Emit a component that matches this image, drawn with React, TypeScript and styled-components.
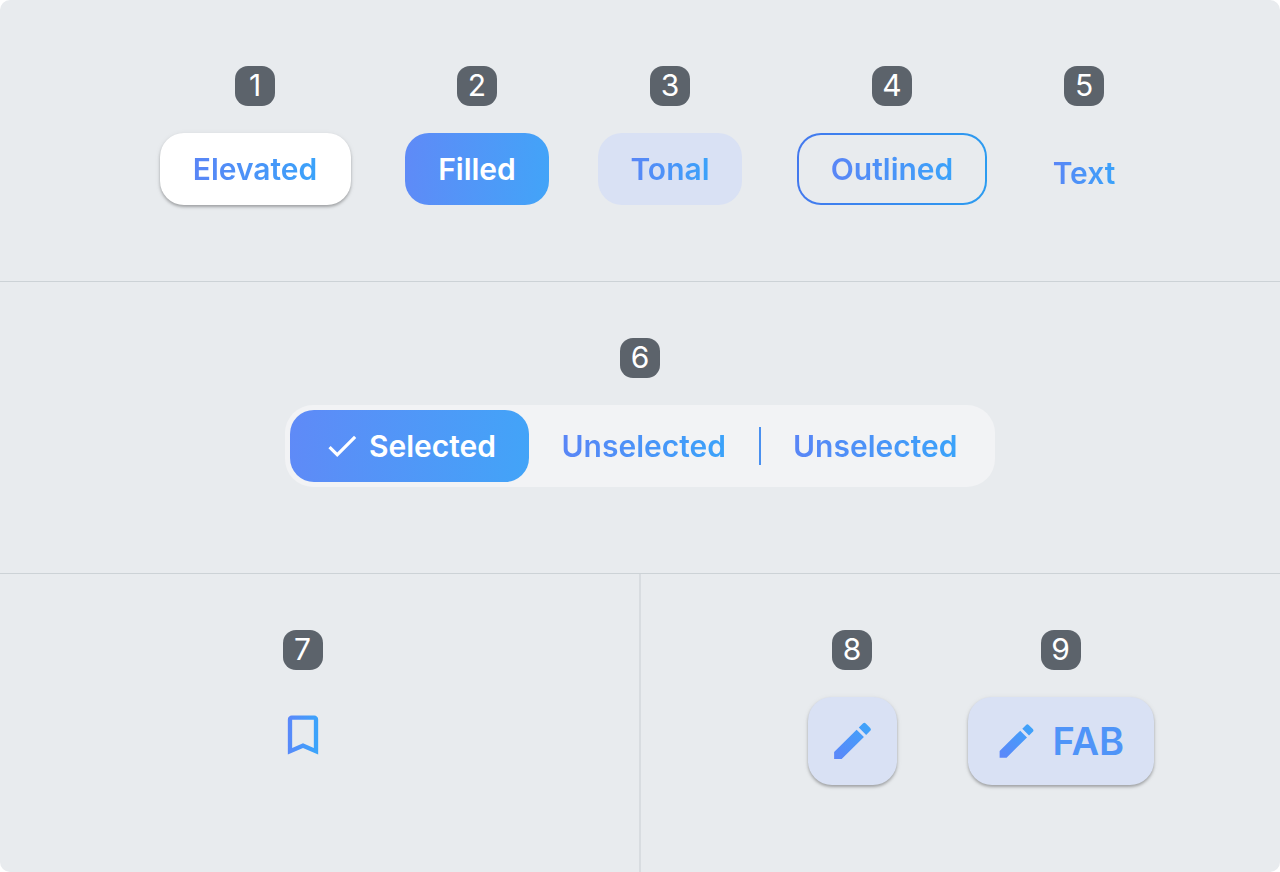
import React from "react";
import styled, { createGlobalStyle, css } from "styled-components";

const brand = "linear-gradient(95deg, #5f8af7, #42a4f8)";
const inkGradient = "linear-gradient(95deg, #5a85f6, #3aa3fa)";

const GlobalStyle = createGlobalStyle`
  *, *::before, *::after { box-sizing: border-box; }
  body {
    margin: 0;
    background: #ffffff;
    font-family: Inter, "Liberation Sans", sans-serif;
  }
  button { font: inherit; cursor: pointer; }
`;

const Board = styled.main`
  display: flex;
  flex-direction: column;
  min-height: 100vh;
  background: #e8ebee;
  border-radius: 10px;
  overflow: hidden;
`;

const Section = styled.section`
  padding: 66px 24px 68px;
  border-bottom: 1px solid #ccd2d6;
`;

const ButtonGrid = styled(Section)`
  display: grid;
  grid-template-columns:
    minmax(0, 251px) minmax(0, 193px) minmax(0, 193px) minmax(0, 251px)
    minmax(0, 133px);
  justify-content: center;
`;

const SegmentSection = styled(Section)`
  padding: 56px 24px 86px;
`;

const Split = styled.div`
  display: grid;
  grid-template-columns: 1fr 1fr;
  flex: 1;
`;

const Panel = styled.section<{ $side: "left" | "right" }>`
  display: flex;
  justify-content: center;
  gap: 71px;
  padding: ${(p) => (p.$side === "left" ? "56px 34px 86px 0" : "56px 0 86px 40px")};
  border: 0 solid #d8dce0;
  border-width: ${(p) => (p.$side === "left" ? "0 1px 0 0" : "0 0 0 1px")};
`;

const Specimen = styled.div`
  display: flex;
  flex-direction: column;
  align-items: center;
  gap: 27px;
`;

const Badge = styled.span`
  display: flex;
  justify-content: center;
  width: 40px;
  height: 40px;
  border-radius: 13px;
  background: #5c636b;
  color: #ffffff;
  font-size: 30px;
  line-height: 39px;
`;

const GradientText = styled.span`
  background: ${inkGradient};
  background-clip: text;
  -webkit-background-clip: text;
  color: transparent;
`;

type Variant = "elevated" | "filled" | "tonal" | "outlined" | "text";

const variants = {
  elevated: css`
    width: 191px;
    background: #ffffff;
    box-shadow: 0 2px 3px rgba(0, 0, 0, 0.28), 0 1px 6px rgba(0, 0, 0, 0.06);
  `,
  filled: css`
    width: 144px;
    background: ${brand};
    color: #ffffff;
  `,
  tonal: css`
    width: 144px;
    background: #d9e1f4;
  `,
  outlined: css`
    width: 190px;
    border: 2px solid transparent;
    background: linear-gradient(#e8ebee, #e8ebee) padding-box,
      linear-gradient(95deg, #4378ee, #2b9cf0) border-box;
  `,
  text: css`
    height: 80px;
    background: none;
  `,
};

const Button = styled.button<{ $variant: Variant }>`
  display: flex;
  align-items: center;
  justify-content: center;
  height: 72px;
  padding: 0;
  border: 0;
  border-radius: 24px;
  font-size: 30px;
  font-weight: 600;
  line-height: 40px;
  ${(p) => variants[p.$variant]}
`;

const Segmented = styled.div`
  display: flex;
  align-items: center;
  width: 710px;
  max-width: 100%;
  padding: 5px;
  border-radius: 28px;
  background: #f2f3f5;
`;

const Segment = styled.button<{ $selected?: boolean }>`
  display: flex;
  flex: ${(p) => (p.$selected ? "0 0 239px" : "1 1 0")};
  align-items: center;
  justify-content: center;
  gap: 8px;
  height: 72px;
  padding: 0;
  border: 0;
  border-radius: 24px;
  background: ${(p) => (p.$selected ? brand : "none")};
  color: #ffffff;
  font-size: 30px;
  font-weight: 600;
  line-height: 40px;
`;

const SegmentDivider = styled.span`
  width: 2px;
  height: 38px;
  background: #4a90f0;
`;

const IconButton = styled.button`
  display: flex;
  align-items: center;
  justify-content: center;
  width: 76px;
  height: 76px;
  padding: 0;
  border: 0;
  background: none;
`;

const Fab = styled.button<{ $extended?: boolean }>`
  display: flex;
  align-items: center;
  justify-content: ${(p) => (p.$extended ? "flex-start" : "center")};
  gap: 14px;
  width: ${(p) => (p.$extended ? "186px" : "89px")};
  height: 88px;
  padding: 0 ${(p) => (p.$extended ? "26px" : "0")};
  border: 0;
  border-radius: 24px;
  background: #d9e1f4;
  box-shadow: 0 2px 3px rgba(0, 0, 0, 0.28), 0 1px 6px rgba(0, 0, 0, 0.06);
  color: #4f94f8;
  font-size: 38px;
  font-weight: 600;
  line-height: 48px;
`;

const CheckIcon = () => (
  <svg width="38" height="38" viewBox="0 0 24 24" fill="#ffffff" aria-hidden="true">
    <path d="M9 16.17 4.83 12l-1.42 1.41L9 19 21 7l-1.41-1.41z" />
  </svg>
);

const BookmarkIcon = () => (
  <svg width="52" height="52" viewBox="0 0 24 24" aria-hidden="true">
    <defs>
      <linearGradient id="bookmark-ink" x1="0" y1="0" x2="1" y2="0.1">
        <stop offset="0" stopColor="#5b87fa" />
        <stop offset="1" stopColor="#3ba4fb" />
      </linearGradient>
    </defs>
    <path
      fill="url(#bookmark-ink)"
      d="M17.2 3H6.8C5.8 3 5 3.8 5 4.8V21l7-3 7 3V4.8c0-1-.8-1.8-1.8-1.8zM17 18l-5-2.2L7 18V5h10z"
    />
  </svg>
);

const PencilIcon = ({ id, size }: { id: string; size: number }) => (
  <svg width={size} height={size} viewBox="0 0 24 24" aria-hidden="true">
    <defs>
      <linearGradient id={id} x1="0" y1="1" x2="1" y2="0">
        <stop offset="0" stopColor="#5d86f9" />
        <stop offset="1" stopColor="#3ca5fa" />
      </linearGradient>
    </defs>
    <path
      fill={`url(#${id})`}
      d="M3 17.1V20.6h3.7L17.6 9.8l-3.6-3.6L3 17.1zM20.7 6.8a1 1 0 0 0 0-1.41l-2.2-2.2a1 1 0 0 0-1.41 0l-2 2 3.6 3.6 2-2z"
    />
  </svg>
);

const buttons: { variant: Variant; label: string }[] = [
  { variant: "elevated", label: "Elevated" },
  { variant: "filled", label: "Filled" },
  { variant: "tonal", label: "Tonal" },
  { variant: "outlined", label: "Outlined" },
  { variant: "text", label: "Text" },
];

export default function App() {
  return (
    <>
      <GlobalStyle />
      <Board>
        <ButtonGrid>
          {buttons.map(({ variant, label }, index) => (
            <Specimen key={variant}>
              <Badge>{index + 1}</Badge>
              <Button type="button" $variant={variant}>
                {variant === "filled" ? label : <GradientText>{label}</GradientText>}
              </Button>
            </Specimen>
          ))}
        </ButtonGrid>
        <SegmentSection>
          <Specimen>
            <Badge>6</Badge>
            <Segmented role="group" aria-label="Segmented button">
              <Segment type="button" $selected aria-pressed="true">
                <CheckIcon />
                Selected
              </Segment>
              <Segment type="button" aria-pressed="false">
                <GradientText>Unselected</GradientText>
              </Segment>
              <SegmentDivider />
              <Segment type="button" aria-pressed="false">
                <GradientText>Unselected</GradientText>
              </Segment>
            </Segmented>
          </Specimen>
        </SegmentSection>
        <Split>
          <Panel $side="left">
            <Specimen>
              <Badge>7</Badge>
              <IconButton type="button" aria-label="Bookmark">
                <BookmarkIcon />
              </IconButton>
            </Specimen>
          </Panel>
          <Panel $side="right">
            <Specimen>
              <Badge>8</Badge>
              <Fab type="button" aria-label="Edit">
                <PencilIcon id="pencil-ink" size={49} />
              </Fab>
            </Specimen>
            <Specimen>
              <Badge>9</Badge>
              <Fab type="button" $extended>
                <PencilIcon id="pencil-ink-extended" size={45} />
                FAB
              </Fab>
            </Specimen>
          </Panel>
        </Split>
      </Board>
    </>
  );
}
